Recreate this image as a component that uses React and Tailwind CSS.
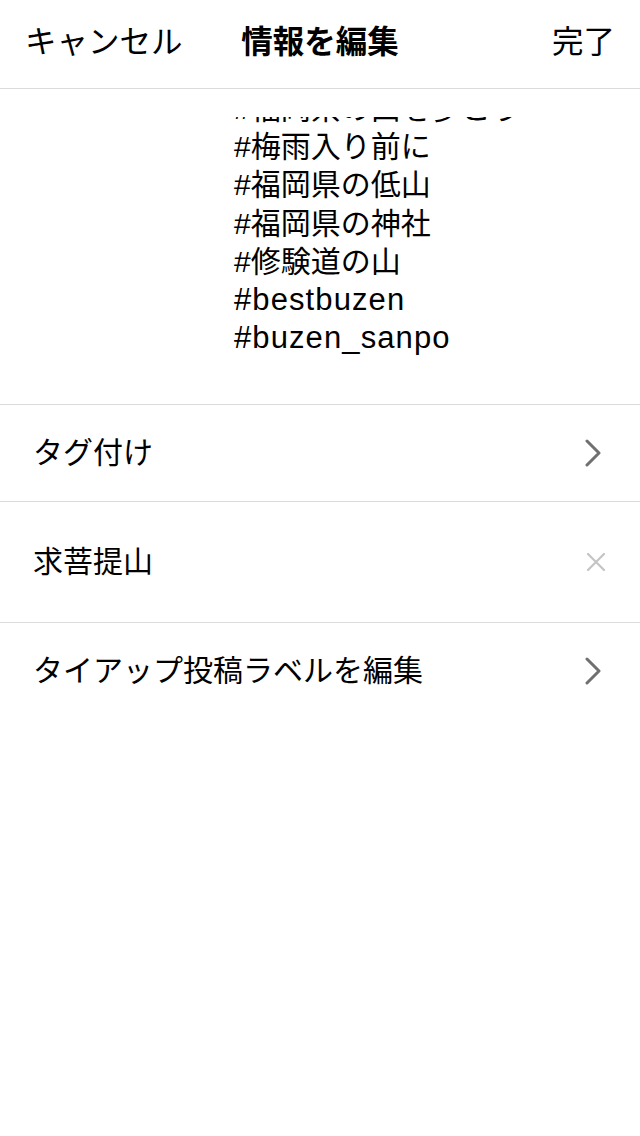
export default function App() {
  return (
    <div className="w-[640px] h-[1136px] bg-white text-black overflow-hidden" style={{ fontFamily: '"Liberation Sans", "Noto Sans CJK JP", sans-serif' }}>
      <div className="h-[89px] border-b border-[#dbdbdb] flex items-center justify-between px-[25px] pb-[2px]">
        <span className="text-[31.5px] leading-none w-[160px]">キャンセル</span>
        <span className="text-[31.5px] leading-none font-bold">情報を編集</span>
        <span className="text-[31.5px] leading-none w-[160px] text-right">完了</span>
      </div>
      <div className="h-[316px] border-b border-[#dbdbdb] pt-[28px]">
        <div className="h-[260px] overflow-hidden pl-[234px]">
          <div className="mt-[-27px] text-[30px] leading-[38.2px]">
            <div>#福岡県の山を歩こう</div>
            <div>#梅雨入り前に</div>
            <div>#福岡県の低山</div>
            <div>#福岡県の神社</div>
            <div>#修験道の山</div>
            <div className="text-[31px] tracking-[1.1px]">#bestbuzen</div>
            <div className="text-[31px] tracking-[1.1px]">#buzen_sanpo</div>
          </div>
        </div>
      </div>
      <div className="h-[97px] border-b border-[#dbdbdb] flex items-center justify-between pl-[33px] pr-[38px]">
        <span className="text-[30px] leading-none">タグ付け</span>
        <svg width="18" height="28" viewBox="0 0 18 28" fill="none">
          <path d="M3 2 L15 14 L3 26" stroke="#707070" strokeWidth="3" strokeLinecap="round" strokeLinejoin="round" />
        </svg>
      </div>
      <div className="h-[121px] border-b border-[#dbdbdb] flex items-center justify-between pl-[33px] pr-[35px]">
        <span className="text-[30px] leading-none">求菩提山</span>
        <svg width="18" height="18" viewBox="0 0 18 18" fill="none">
          <path d="M1 1 L17 17 M17 1 L1 17" stroke="#c4c4c4" strokeWidth="2.2" strokeLinecap="round" />
        </svg>
      </div>
      <div className="h-[96px] flex items-center justify-between pl-[33px] pr-[38px]">
        <span className="text-[30px] leading-none">タイアップ投稿ラベルを編集</span>
        <svg width="18" height="28" viewBox="0 0 18 28" fill="none">
          <path d="M3 2 L15 14 L3 26" stroke="#707070" strokeWidth="3" strokeLinecap="round" strokeLinejoin="round" />
        </svg>
      </div>
    </div>
  );
}
